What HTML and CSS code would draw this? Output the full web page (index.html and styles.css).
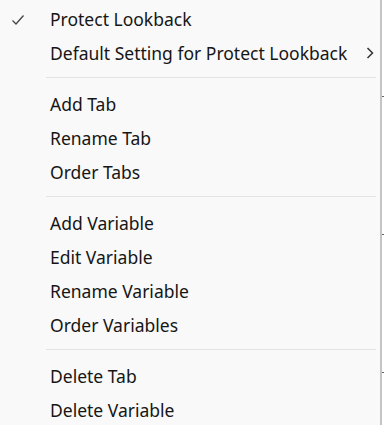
FILE: index.html
```html
<!DOCTYPE html>
<html lang="en">
<head>
<meta charset="UTF-8" />
<meta name="viewport" content="width=device-width, initial-scale=1" />
<link rel="stylesheet" href="styles.css">
</head>
<body>

<div class="screen">
  <div class="menu" role="menu">
    <div class="item" role="menuitemcheckbox" aria-checked="true">
      <span class="check">
        <svg width="14" height="12" viewBox="0 0 14 12"><path d="M1.5 6.5 L5 10 L12.5 1.5" fill="none" stroke="#444" stroke-width="1.3"/></svg>
      </span>
      <span class="label">Protect Lookback</span>
    </div>
    <div class="item" role="menuitem">
      <span class="check"></span>
      <span class="label">Default Setting for Protect Lookback</span>
      <span class="arrow">
        <svg width="8" height="12" viewBox="0 0 8 12"><path d="M1.5 1 L6.5 6 L1.5 11" fill="none" stroke="#333" stroke-width="1.5"/></svg>
      </span>
    </div>
    <div class="sep"></div>
    <div class="item" role="menuitem"><span class="check"></span><span class="label">Add Tab</span></div>
    <div class="item" role="menuitem"><span class="check"></span><span class="label">Rename Tab</span></div>
    <div class="item" role="menuitem"><span class="check"></span><span class="label">Order Tabs</span></div>
    <div class="sep"></div>
    <div class="item" role="menuitem"><span class="check"></span><span class="label">Add Variable</span></div>
    <div class="item" role="menuitem"><span class="check"></span><span class="label">Edit Variable</span></div>
    <div class="item" role="menuitem"><span class="check"></span><span class="label">Rename Variable</span></div>
    <div class="item" role="menuitem"><span class="check"></span><span class="label">Order Variables</span></div>
    <div class="sep"></div>
    <div class="item" role="menuitem"><span class="check"></span><span class="label">Delete Tab</span></div>
    <div class="item" role="menuitem"><span class="check"></span><span class="label">Delete Variable</span></div>
  </div>
  <div class="behind"></div>
</div>

</body>
</html>
```

FILE: styles.css
```css
html, body {
  margin: 0;
  height: 100%;
  overflow: hidden;
}

body {
  font-family: "Noto Sans", "Open Sans", sans-serif;
  background: #fff;
  color: #161616;
}

.screen {
  display: flex;
  height: 425px;
}

.menu {
  width: 382px;
  flex-shrink: 0;
  box-sizing: border-box;
  background: #f9f9f9;
  border-right: 2px solid #c4c4c4;
  padding-top: 2px;
}

.item {
  display: flex;
  align-items: center;
  height: 34px;
  font-size: 17.5px;
  padding-right: 6px;
}

.check {
  width: 50px;
  flex-shrink: 0;
  display: flex;
  justify-content: center;
  padding-right: 14px;
  box-sizing: border-box;
  padding-top: 1px;
}

.label {
  flex-grow: 1;
  white-space: nowrap;
}

.arrow {
  display: flex;
  align-items: center;
}

.sep {
  height: 17px;
  box-sizing: border-box;
  display: flex;
  align-items: flex-start;
  padding: 7px 4px 0 46px;
}

.sep::before {
  content: "";
  flex-grow: 1;
  height: 1px;
  background: #e3e3e3;
}

.behind {
  flex-grow: 1;
  background:
    repeating-linear-gradient(to bottom,
      transparent 0, transparent 96px,
      #666 96px, #666 97px,
      transparent 97px, transparent 138px);
}
```
